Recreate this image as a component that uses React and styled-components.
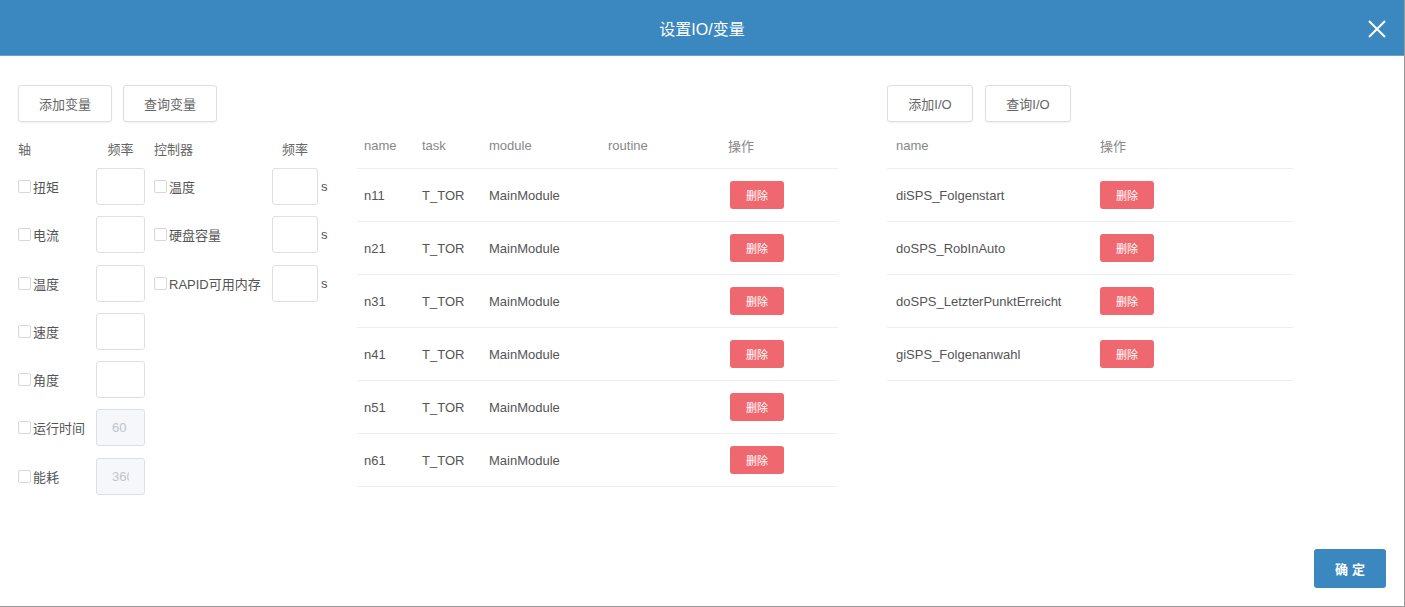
import React from "react";
import styled, { createGlobalStyle } from "styled-components";

const GlobalStyle = createGlobalStyle`
  html, body {
    margin: 0;
    padding: 0;
    background: #fff;
  }
  body {
    font-family: "Liberation Sans", "Noto Sans CJK SC", sans-serif;
    color: #555;
  }
`;

const Dialog = styled.div`
  width: 1404px;
  height: 606px;
  border-right: 1px solid #9a9a9a;
  border-bottom: 1px solid #9a9a9a;
  display: flex;
  flex-direction: column;
  background: #fff;
`;

const Header = styled.div`
  height: 56px;
  flex: none;
  background: #3b88c0;
  border-bottom: 1px solid #6aa3cc;
  box-sizing: border-box;
  display: flex;
  align-items: center;
  justify-content: center;
  position: relative;
  color: #fff;
  font-size: 16px;
`;

const CloseButton = styled.button`
  position: absolute;
  right: 16px;
  top: 18px;
  width: 22px;
  height: 22px;
  padding: 0;
  border: none;
  background: transparent;
  cursor: pointer;
`;

const Body = styled.div`
  flex: 1;
  display: flex;
  padding: 29px 0 0 18px;
`;

const LeftPanel = styled.div`
  width: 339px;
  flex: none;
`;

const ButtonRow = styled.div`
  display: flex;
  gap: ${p => p.gap || 10}px;
  height: 37px;
`;

const PlainButton = styled.button`
  height: 37px;
  width: ${p => p.width}px;
  box-sizing: border-box;
  border: 1px solid #dcdfe6;
  border-radius: 3px;
  background: #fff;
  color: #666;
  font-family: "Liberation Sans", "Noto Sans CJK SC", sans-serif;
  font-size: 13px;
  box-shadow: 0 1px 2px rgba(0, 0, 0, 0.06);
  padding: 0;
`;

const FormColumns = styled.div`
  display: flex;
  margin-top: 18px;
`;

const FieldGroup = styled.div`
  display: flex;
  flex-direction: column;
  margin-left: ${p => p.offset || 0}px;
`;

const GroupHead = styled.div`
  display: grid;
  grid-template-columns: ${p => p.cols};
  height: 20px;
  line-height: 20px;
  margin-bottom: 8px;
  font-size: 13px;
  color: #666;
`;

const HeadLabel = styled.span`
  text-align: ${p => (p.center ? "center" : "left")};
`;

const FieldGrid = styled.div`
  display: grid;
  grid-template-columns: ${p => p.cols};
  grid-auto-rows: 37px;
  row-gap: 11.3px;
  align-items: center;
`;

const CheckLabel = styled.label`
  display: flex;
  align-items: center;
  font-size: 13px;
  color: #555;
  white-space: nowrap;
`;

const Box = styled.span`
  width: 11px;
  height: 11px;
  border: 1px solid #d8d8d8;
  border-radius: 2px;
  background: #fff;
  margin-right: 2px;
  flex: none;
`;

const FreqInput = styled.input`
  width: 100%;
  height: 37px;
  box-sizing: border-box;
  border: 1px solid #dcdfe6;
  border-radius: 3px;
  background: ${p => (p.disabled ? "#f5f7fa" : "#fff")};
  color: #c0c4cc;
  padding: 0 15px;
  font-family: "Liberation Sans", sans-serif;
  font-size: 13px;
  outline: none;
`;

const Unit = styled.span`
  font-size: 13px;
  color: #555;
  padding-left: 3px;
`;

const TableColumn = styled.div`
  width: ${p => p.width}px;
  flex: none;
  margin-left: ${p => p.offset || 0}px;
  padding-top: ${p => p.top || 0}px;
`;

const Table = styled.div`
  display: grid;
  grid-template-columns: ${p => p.cols};
`;

const HeadCell = styled.div`
  height: 47px;
  border-bottom: 1px solid #ebeef5;
  display: flex;
  align-items: center;
  padding-left: ${p => p.pad || 7}px;
  font-size: 13px;
  color: #888;
  box-sizing: border-box;
`;

const Cell = styled.div`
  height: 53px;
  border-bottom: 1px solid #ebeef5;
  display: flex;
  align-items: center;
  padding-left: ${p => p.pad || 7}px;
  font-size: 13px;
  color: #555;
  box-sizing: border-box;
`;

const DeleteButton = styled.button`
  width: 54px;
  height: 28px;
  border: none;
  border-radius: 3px;
  background: #f0686f;
  color: #fff;
  font-family: "Noto Sans CJK SC", sans-serif;
  font-size: 11px;
  padding: 0;
  margin-left: 2px;
`;

const Footer = styled.div`
  display: flex;
  justify-content: flex-end;
  padding: 0 18px 18px 0;
`;

const PrimaryButton = styled.button`
  width: 72px;
  height: 39px;
  border: none;
  border-radius: 3px;
  background: #3b88c0;
  color: #fff;
  font-family: "Noto Sans CJK SC", sans-serif;
  font-size: 13px;
  font-weight: 600;
  letter-spacing: 4px;
  padding: 0 0 0 4px;
`;

const axisFields = [
  { label: "扭矩" },
  { label: "电流" },
  { label: "温度" },
  { label: "速度" },
  { label: "角度" },
  { label: "运行时间", value: "60", disabled: true },
  { label: "能耗", value: "3600", disabled: true }
];

const controllerFields = ["温度", "硬盘容量", "RAPID可用内存"];

const variables = ["n11", "n21", "n31", "n41", "n51", "n61"];

const ioList = [
  "diSPS_Folgenstart",
  "doSPS_RobInAuto",
  "doSPS_LetzterPunktErreicht",
  "giSPS_Folgenanwahl"
];

function CloseIcon() {
  return (
    <svg width="22" height="22" viewBox="0 0 22 22">
      <path d="M3 3 L19 19 M19 3 L3 19" stroke="#fff" strokeWidth="2" fill="none" />
    </svg>
  );
}

export default function App() {
  return (
    <>
      <GlobalStyle />
      <Dialog>
        <Header>
          设置IO/变量
          <CloseButton>
            <CloseIcon />
          </CloseButton>
        </Header>
        <Body>
          <LeftPanel>
            <ButtonRow gap={11}>
              <PlainButton width={94}>添加变量</PlainButton>
              <PlainButton width={94}>查询变量</PlainButton>
            </ButtonRow>
            <FormColumns>
              <FieldGroup>
                <GroupHead cols="78px 49px">
                  <HeadLabel>轴</HeadLabel>
                  <HeadLabel center>频率</HeadLabel>
                </GroupHead>
                <FieldGrid cols="78px 49px">
                  {axisFields.map(f => (
                    <React.Fragment key={f.label}>
                      <CheckLabel>
                        <Box />
                        {f.label}
                      </CheckLabel>
                      <FreqInput
                        disabled={f.disabled}
                        defaultValue={f.value || ""}
                      />
                    </React.Fragment>
                  ))}
                </FieldGrid>
              </FieldGroup>
              <FieldGroup offset={9}>
                <GroupHead cols="118px 46px">
                  <HeadLabel>控制器</HeadLabel>
                  <HeadLabel center>频率</HeadLabel>
                </GroupHead>
                <FieldGrid cols="118px 46px auto">
                  {controllerFields.map(label => (
                    <React.Fragment key={label}>
                      <CheckLabel>
                        <Box />
                        {label}
                      </CheckLabel>
                      <FreqInput />
                      <Unit>s</Unit>
                    </React.Fragment>
                  ))}
                </FieldGrid>
              </FieldGroup>
            </FormColumns>
          </LeftPanel>

          <TableColumn width={481} top={37}>
            <Table cols="58px 67px 119px 120px 117px">
              <HeadCell>name</HeadCell>
              <HeadCell>task</HeadCell>
              <HeadCell>module</HeadCell>
              <HeadCell>routine</HeadCell>
              <HeadCell>操作</HeadCell>
              {variables.map(name => (
                <React.Fragment key={name}>
                  <Cell>{name}</Cell>
                  <Cell>T_TOR</Cell>
                  <Cell>MainModule</Cell>
                  <Cell />
                  <Cell>
                    <DeleteButton>删除</DeleteButton>
                  </Cell>
                </React.Fragment>
              ))}
            </Table>
          </TableColumn>

          <TableColumn width={406} offset={49}>
            <ButtonRow gap={12}>
              <PlainButton width={86}>添加I/O</PlainButton>
              <PlainButton width={86}>查询I/O</PlainButton>
            </ButtonRow>
            <Table cols="205px 201px">
              <HeadCell pad={9}>name</HeadCell>
              <HeadCell pad={8}>操作</HeadCell>
              {ioList.map(name => (
                <React.Fragment key={name}>
                  <Cell pad={9}>{name}</Cell>
                  <Cell pad={6}>
                    <DeleteButton>删除</DeleteButton>
                  </Cell>
                </React.Fragment>
              ))}
            </Table>
          </TableColumn>
        </Body>
        <Footer>
          <PrimaryButton>确定</PrimaryButton>
        </Footer>
      </Dialog>
    </>
  );
}
